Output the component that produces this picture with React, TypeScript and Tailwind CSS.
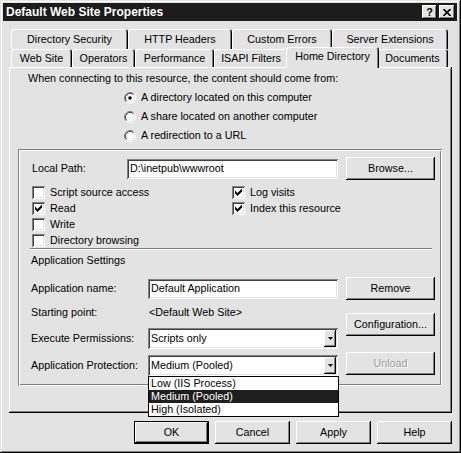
import React from "react";

// classic 3D edges, drawn with inset shadows
const raised = "shadow-[inset_-1px_-1px_#000,inset_1px_1px_#fff,inset_-2px_-2px_#808080]";
const sunken = "shadow-[inset_1px_1px_#808080,inset_-1px_-1px_#fff,inset_2px_2px_#404040,inset_-2px_-2px_#e3e3e3]";
const etched = "shadow-[inset_1px_1px_#808080,inset_-1px_-1px_#fff,inset_2px_2px_#fff,inset_-2px_-2px_#808080]";
const tabEdge = "shadow-[inset_1px_1px_#fff,inset_-1px_0_#000,inset_-2px_0_#808080]";

const BACK_TABS = [
  { label: "Directory Security", w: "w-[117px]" },
  { label: "HTTP Headers", w: "w-[104px]" },
  { label: "Custom Errors", w: "w-[100px]" },
  { label: "Server Extensions", w: "w-[116px]" },
];

const FRONT_TABS = [
  { label: "Web Site", w: "w-[61px]" },
  { label: "Operators", w: "w-[63px]" },
  { label: "Performance", w: "w-[79px]" },
  { label: "ISAPI Filters", w: "w-[74px]" },
  { label: "Home Directory", w: "w-[93px]", selected: true },
  { label: "Documents", w: "w-[71px]" },
];

function Button({
  label,
  w = "w-[89px]",
  isDefault,
  disabled,
  className = "",
}: {
  label: string;
  w?: string;
  isDefault?: boolean;
  disabled?: boolean;
  className?: string;
}) {
  const edge = isDefault
    ? "shadow-[inset_0_0_0_1px_#000,inset_-2px_-2px_#000,inset_2px_2px_#fff,inset_-3px_-3px_#808080]"
    : raised;
  return (
    <div
      className={`${w} h-[23px] shrink-0 flex items-center justify-center bg-[#e3e3e3] ${edge} ${
        disabled ? "text-[#9c9c9c] [text-shadow:1px_1px_#fff]" : ""
      } ${className}`}
    >
      {label}
    </div>
  );
}

function Check({ label, checked }: { label: string; checked?: boolean }) {
  return (
    <div className="h-[16px] flex items-center gap-[5px]">
      <div className={`w-[13px] h-[13px] bg-white ${sunken} flex items-center justify-center`}>
        {checked && (
          <svg width="7" height="8" viewBox="0 0 7 8">
            <path d="M0 2.5L2.5 5L7 0.5V3.5L2.5 8L0 5.5Z" fill="#000" />
          </svg>
        )}
      </div>
      <span>{label}</span>
    </div>
  );
}

function Radio({ label, checked }: { label: string; checked?: boolean }) {
  return (
    <div className="h-[19px] flex items-center gap-[5px]">
      <svg width="12" height="12" viewBox="0 0 12 12">
        <circle cx="6" cy="6" r="4.5" fill="#fff" />
        <path d="M2.11 9.89A5.5 5.5 0 0 1 9.89 2.11" stroke="#808080" fill="none" />
        <path d="M9.89 2.11A5.5 5.5 0 0 1 2.11 9.89" stroke="#fff" fill="none" />
        <path d="M2.82 9.18A4.5 4.5 0 0 1 9.18 2.82" stroke="#404040" fill="none" />
        <path d="M9.18 2.82A4.5 4.5 0 0 1 2.82 9.18" stroke="#e3e3e3" fill="none" />
        {checked && <circle cx="6" cy="6" r="1.8" fill="#000" />}
      </svg>
      <span>{label}</span>
    </div>
  );
}

function TextBox({ value, w }: { value: string; w: string }) {
  return (
    <div className={`${w} h-[20px] shrink-0 bg-white ${sunken} flex items-center pl-[3px]`}>
      {value}
    </div>
  );
}

function Combo({ value, children }: { value: string; children?: React.ReactNode }) {
  return (
    <div className={`relative w-[190px] h-[21px] shrink-0 bg-white ${sunken} flex p-[2px]`}>
      <span className="flex-1 flex items-center pl-[1px]">{value}</span>
      <div className={`w-[12px] bg-[#e3e3e3] ${raised} flex items-center justify-center`}>
        <svg width="5" height="3" viewBox="0 0 5 3">
          <path d="M0 0H5L2.5 3Z" fill="#000" />
        </svg>
      </div>
      {children}
    </div>
  );
}

function TitleBar() {
  return (
    <div className="h-[18px] bg-[#1c1c1c] flex items-center justify-between pl-[3px] pr-[2px]">
      <span className="text-white font-bold text-[12px]">Default Web Site Properties</span>
      <div className="flex gap-[2px]">
        <div className={`w-[15px] h-[14px] bg-[#e3e3e3] ${raised} flex items-center justify-center font-bold text-[11px] leading-none`}>
          ?
        </div>
        <div className={`w-[16px] h-[14px] bg-[#e3e3e3] ${raised} flex items-center justify-center`}>
          <svg width="8" height="7" viewBox="0 0 8 7">
            <path d="M0.5 0L7.5 7M7.5 0L0.5 7" stroke="#000" strokeWidth="1.6" />
          </svg>
        </div>
      </div>
    </div>
  );
}

function Tabs() {
  return (
    <div>
      <div className="flex h-[20px] ml-[2px]">
        {BACK_TABS.map((t) => (
          <div
            key={t.label}
            className={`${t.w} shrink-0 h-full rounded-t-[3px] ${tabEdge} flex items-center justify-center pt-[1px]`}
          >
            {t.label}
          </div>
        ))}
      </div>
      <div className="flex items-start h-[18px] ml-[2px]">
        {FRONT_TABS.map((t) =>
          t.selected ? (
            <div
              key={t.label}
              className={`${t.w} shrink-0 relative z-10 -mx-[2px] -mt-[2px] h-[21px] bg-[#e3e3e3] rounded-t-[3px] ${tabEdge} flex items-start justify-center pt-[3px]`}
            >
              {t.label}
            </div>
          ) : (
            <div
              key={t.label}
              className={`${t.w} shrink-0 h-[18px] rounded-t-[3px] ${tabEdge} flex items-center justify-center pt-[1px]`}
            >
              {t.label}
            </div>
          )
        )}
      </div>
    </div>
  );
}

export default function App() {
  return (
    <div className="w-[461px] h-[453px] bg-[#e3e3e3] p-[3px] pr-[4px] font-['Liberation_Sans',Arial,sans-serif] text-[10.75px] leading-[13px] text-black select-none shadow-[inset_-1px_-1px_#000,inset_1px_1px_#e3e3e3,inset_-2px_-2px_#808080,inset_2px_2px_#fff]">
      <TitleBar />
      <div className="pl-[6px] pr-[5px] pt-[8px]">
        <Tabs />

        {/* Home Directory page */}
        <div className="h-[346px] pt-[5px] shadow-[inset_-1px_-1px_#000,inset_1px_1px_#fff,inset_-2px_-2px_#808080]">
          <div className="pl-[19px]">When connecting to this resource, the content should come from:</div>
          <div className="ml-[115px] mt-[3px]">
            <Radio label="A directory located on this computer" checked />
            <Radio label="A share located on another computer" />
            <Radio label="A redirection to a URL" />
          </div>

          <div className={`ml-[9px] mt-[4px] w-[424px] h-[237px] pt-[8px] ${etched}`}>
            <div className="flex items-center h-[23px] pl-[14px]">
              <span className="w-[95px] shrink-0">Local Path:</span>
              <TextBox value="D:\inetpub\wwwroot" w="w-[211px]" />
              <Button label="Browse..." className="ml-[8px]" />
            </div>

            <div className="mt-[4px] pl-[14px] grid grid-cols-[200px_1fr]">
              <div>
                <Check label="Script source access" />
                <Check label="Read" checked />
                <Check label="Write" />
                <Check label="Directory browsing" />
              </div>
              <div>
                <Check label="Log visits" checked />
                <Check label="Index this resource" checked />
              </div>
            </div>

            <div className="ml-[12px] w-[402px] h-0 border-t border-b border-t-[#808080] border-b-white" />

            <div className="mt-[4px] pl-[13px]">Application Settings</div>

            <div className="mt-[10px] flex">
              <div className="w-[328px] pl-[13px] flex flex-col">
                <div className="h-[23px] flex items-center">
                  <span className="w-[117px] shrink-0">Application name:</span>
                  <TextBox value="Default Application" w="w-[190px]" />
                </div>
                <div className="mt-[6px] h-[13px] flex">
                  <span className="w-[118px] shrink-0">Starting point:</span>
                  <span>&lt;Default Web Site&gt;</span>
                </div>
                <div className="mt-[9px] h-[21px] flex items-center">
                  <span className="w-[117px] shrink-0">Execute Permissions:</span>
                  <Combo value="Scripts only" />
                </div>
                <div className="mt-[6px] h-[21px] flex items-center">
                  <span className="w-[117px] shrink-0">Application Protection:</span>
                  <Combo value="Medium (Pooled)">
                    <div className="absolute left-0 top-[21px] z-20 w-[191px] bg-white border border-black">
                      <div className="h-[13px] pl-[2px]">Low (IIS Process)</div>
                      <div className="h-[13px] pl-[2px] bg-[#1e1e1e] text-white">Medium (Pooled)</div>
                      <div className="h-[13px] pl-[2px]">High (Isolated)</div>
                    </div>
                  </Combo>
                </div>
              </div>
              <div className="flex flex-col">
                <Button label="Remove" />
                <Button label="Configuration..." className="mt-[13px]" />
                <Button label="Unload" disabled className="mt-[16px]" />
              </div>
            </div>
          </div>
        </div>

        <div className="flex justify-end gap-[6px] mt-[8px]">
          <Button label="OK" w="w-[75px]" isDefault />
          <Button label="Cancel" w="w-[75px]" />
          <Button label="Apply" w="w-[75px]" />
          <Button label="Help" w="w-[75px]" />
        </div>
      </div>
    </div>
  );
}
